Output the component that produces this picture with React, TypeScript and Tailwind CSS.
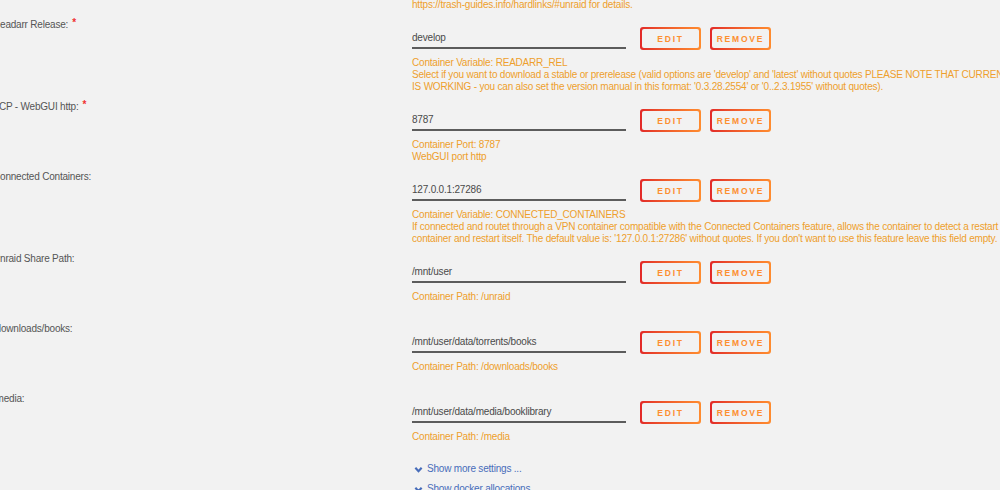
const rows = [
  {
    label: "Readarr Release:",
    required: true,
    value: "develop",
    desc: [
      "Container Variable: READARR_REL",
      "Select if you want to download a stable or prerelease (valid options are 'develop' and 'latest' without quotes PLEASE NOTE THAT CURRENTLY ONLY DEVELOP",
      "IS WORKING - you can also set the version manual in this format: '0.3.28.2554' or '0..2.3.1955' without quotes).",
    ],
  },
  {
    label: "TCP - WebGUI http:",
    required: true,
    value: "8787",
    desc: ["Container Port: 8787", "WebGUI port http"],
  },
  {
    label: "Connected Containers:",
    value: "127.0.0.1:27286",
    desc: [
      "Container Variable: CONNECTED_CONTAINERS",
      "If connected and routet through a VPN container compatible with the Connected Containers feature, allows the container to detect a restart from the VPN",
      "container and restart itself. The default value is: '127.0.0.1:27286' without quotes. If you don't want to use this feature leave this field empty.",
    ],
  },
  {
    label: "Unraid Share Path:",
    value: "/mnt/user",
    desc: ["Container Path: /unraid", ""],
  },
  {
    label: "/downloads/books:",
    value: "/mnt/user/data/torrents/books",
    desc: ["Container Path: /downloads/books", ""],
  },
  {
    label: "/media:",
    value: "/mnt/user/data/media/booklibrary",
    desc: ["Container Path: /media", ""],
  },
];

function GradientButton({ children }: { children: string }) {
  return (
    <div className="w-[61px] h-[23px] rounded-[3px] p-[2px] bg-gradient-to-r from-[#e22828] to-[#ff8c2f]">
      <div className="w-full h-full rounded-[2px] bg-[#f2f2f2] flex items-center justify-center text-[8.5px] font-bold tracking-[1.8px] text-[#fd8f30]">
        {children}
      </div>
    </div>
  );
}

function Chevron() {
  return (
    <svg viewBox="0 0 10 10" className="w-[9px] h-[9px]" fill="none" stroke="#486dba" strokeWidth={2.4}>
      <path d="M1.5 3 L5 6.8 L8.5 3" />
    </svg>
  );
}

export default function App() {
  return (
    <div
      className="w-[1000px] h-[490px] overflow-hidden bg-[#f2f2f2] text-[10px] tracking-[-0.2px] leading-[12px]"
      style={{ fontFamily: '"Liberation Sans", Arial, sans-serif' }}
    >
      <div className="pl-[412px] -mt-px mb-2 text-[#ee9f2c] whitespace-nowrap">
        https://trash-guides.info/hardlinks/#unraid for details.
      </div>

      {rows.map((r) => (
        <div key={r.label} className="flex mb-2">
          <div className="w-[419px] -ml-[7px] shrink-0 text-[#555] whitespace-nowrap">
            {r.label}
            {r.required && (
              <span className="ml-[4px] text-[#f03030] text-[10px] font-bold leading-none relative -top-[2px]">*</span>
            )}
          </div>
          <div className="pt-2 min-w-0">
            <div className="flex items-start">
              <div className="w-[214px] h-[22px] border-b-2 border-[#5c5c5c] text-[#4a4a4a] flex items-center pt-px">
                {r.value}
              </div>
              <div className="ml-[14px] flex gap-[9px]">
                <GradientButton>EDIT</GradientButton>
                <GradientButton>REMOVE</GradientButton>
              </div>
            </div>
            <div className="mt-[7px] text-[#ee9f2c] whitespace-nowrap">
              {r.desc.map((d, i) => (
                <div key={i} className="h-[12px]">
                  {d}
                </div>
              ))}
            </div>
          </div>
        </div>
      ))}

      <div className="pl-[414px] text-[#486dba] flex flex-col gap-2">
        <div className="flex items-center gap-[4px] h-[12px]">
          <Chevron />
          <span>Show more settings ...</span>
        </div>
        <div className="flex items-center gap-[4px] h-[12px]">
          <Chevron />
          <span>Show docker allocations ...</span>
        </div>
      </div>
    </div>
  );
}
